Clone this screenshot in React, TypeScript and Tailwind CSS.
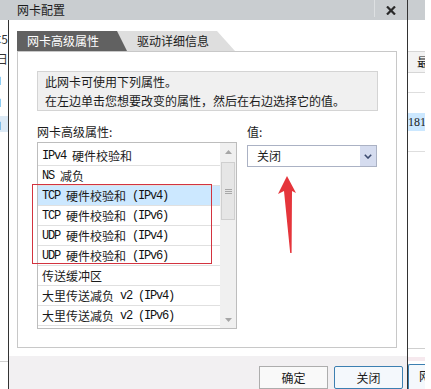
import React from 'react';

const items = [
  'IPv4 硬件校验和',
  'NS 减负',
  'TCP 硬件校验和 (IPv4)',
  'TCP 硬件校验和 (IPv6)',
  'UDP 硬件校验和 (IPv4)',
  'UDP 硬件校验和 (IPv6)',
  '传送缓冲区',
  '大里传送减负 v2 (IPv4)',
  '大里传送减负 v2 (IPv6)',
];

// latin parts get a narrow mono face, like the half-width glyphs of the original
const ItemText = ({ text }: { text: string }) => {
  const parts = text.split(/([\u4e00-\u9fff]+)/).filter(Boolean);
  return (
    <>
      {parts.map((p, i) =>
        /[\u4e00-\u9fff]/.test(p) ? (
          <span key={i}>{p}</span>
        ) : (
          <span key={i} className="font-['Liberation_Mono'] text-[12px] tracking-[-1.2px] whitespace-pre text-[#111]">
            {p}
          </span>
        )
      )}
    </>
  );
};

const Tri = ({ up }: { up?: boolean }) => (
  <svg width="7" height="4" viewBox="0 0 7 4">
    <path d={up ? 'M0 4 L3.5 0 L7 4 Z' : 'M0 0 L3.5 4 L7 0 Z'} fill="#a6a6a6" />
  </svg>
);

export default function App() {
  return (
    <div className="relative w-[431px] h-[389px] overflow-hidden bg-white font-['Noto_Sans_CJK_SC',sans-serif] text-[12px] text-[#1b1b1b]">
      {/* title bar */}
      <div className="flex h-[20px]">
        <div className="flex w-[408px] items-center bg-[#c9cdd0] border-r border-[#333]">
          <span className="flex-1 pl-[17px] leading-[20px]">网卡配置</span>
          <div className="self-start h-[17px] w-px bg-[#dde0e2]" />
          <div className="flex w-[32px] items-center justify-center">
            <svg width="10" height="9" viewBox="0 0 10 9">
              <path d="M1 0.5 L9 8.5 M9 0.5 L1 8.5" stroke="#2a2a2a" strokeWidth="2.2" />
            </svg>
          </div>
        </div>
        <div className="w-[17px] bg-[#c9cdd0]" />
      </div>

      <div className="flex h-[369px]">
        {/* window behind, left edge */}
        <div className="flex w-[8px] flex-col overflow-hidden text-[#333]">
          <div className="h-[12px]" />
          <div className="flex h-[14px] justify-end whitespace-nowrap leading-[14px]">版本5</div>
          <div className="h-[6px]" />
          <div className="flex h-[14px] justify-end whitespace-nowrap leading-[14px]">时间日</div>
          <div className="h-[6px]" />
          <div className="flex h-[14px] justify-end whitespace-nowrap leading-[14px]">卡」</div>
          <div className="h-[8px]" />
          <div className="flex h-[14px] justify-end whitespace-nowrap leading-[14px]">址」</div>
          <div className="h-[8px]" />
          <div className="flex h-[16px] justify-end whitespace-nowrap bg-[#dceaf6] leading-[16px]">值」</div>
          <div className="h-[230px] border-b border-[#cfcfcf]" />
        </div>

        {/* dialog */}
        <div className="flex w-[400px] flex-col border-l border-r border-[#333]">
          <div className="h-[337px] bg-white pl-[8px] pt-[11px]">
            <div className="flex h-[20px]">
              <div className="relative z-10 w-[110px] bg-[#616161] pl-[10px] leading-[20px] text-white [clip-path:polygon(0_0,100px_0,110px_100%,0_100%)]">
                网卡高级属性
              </div>
              <div className="-ml-[10px] w-[118px] bg-[#dedede] pl-[20px] leading-[20px] [clip-path:polygon(0_0,100px_0,118px_100%,0_100%)]">
                驱动详细信息
              </div>
            </div>

            <div className="h-[297px] w-[380px] border border-[#c8c8c8] pl-[19px] pt-[19px]">
              <div className="h-[40px] w-[341px] border border-[#d4d4d4] bg-[#f0f0f0] pl-[7px] leading-[19px]">
                <div>此网卡可使用下列属性。</div>
                <div className="whitespace-nowrap">在左边单击您想要改变的属性，然后在右边选择它的值。</div>
              </div>

              <div className="mt-[11px] flex">
                <div className="w-[200px]">
                  <div className="h-[20px] leading-[20px]">网卡高级属性:</div>
                  <div className="flex h-[187px] border border-[#bdbdbd]">
                    <div className="flex-1 overflow-hidden pt-[3px]">
                      {items.map((it, i) => (
                        <div
                          key={it}
                          className={`flex h-[20px] items-center whitespace-nowrap border-b border-[#e0e0e0] pl-[4px] ${
                            i === 2 ? 'bg-[#cce8ff]' : ''
                          }`}
                        >
                          <ItemText text={it} />
                        </div>
                      ))}
                    </div>
                    <div className="flex w-[16px] flex-col bg-[#f0f0f0]">
                      <div className="flex h-[17px] items-center justify-center">
                        <Tri up />
                      </div>
                      <div className="mx-[1px] mt-[2px] flex h-[58px] items-center justify-center border border-[#cfcfcf] bg-[#e6e6e6]">
                        <div className="flex w-[7px] flex-col gap-[1px]">
                          <div className="h-px bg-[#a8a8a8]" />
                          <div className="h-px bg-[#a8a8a8]" />
                          <div className="h-px bg-[#a8a8a8]" />
                        </div>
                      </div>
                      <div className="flex-1" />
                      <div className="flex h-[17px] items-center justify-center">
                        <Tri />
                      </div>
                    </div>
                  </div>
                </div>

                <div className="ml-[10px]">
                  <div className="h-[20px] leading-[20px]">值:</div>
                  <div className="mt-[3px] flex h-[22px] w-[130px] border border-[#abb2c4] bg-white">
                    <span className="flex-1 pl-[9px] leading-[20px]">关闭</span>
                    <div className="flex w-[16px] items-center justify-center bg-[#d5dcef]">
                      <svg width="8" height="5" viewBox="0 0 8 5">
                        <path d="M0.8 0.8 L4 4 L7.2 0.8" fill="none" stroke="#3d4c70" strokeWidth="1.6" />
                      </svg>
                    </div>
                  </div>
                </div>
              </div>
            </div>
          </div>

          <div className="flex flex-1 justify-end gap-[6px] bg-[#f2f0f2] pr-[4px] pt-[10px]">
            <button className="h-[23px] w-[69px] border border-[#adadad] bg-[#f9f9f9] text-[12px]">确定</button>
            <button className="h-[23px] w-[69px] rounded-[2px] border border-[#3c7fb1] bg-[#f4f8fc] text-[12px]">关闭</button>
          </div>
        </div>

        {/* window behind, right edge */}
        <div className="w-[17px] overflow-hidden">
          <div className="h-[31px]" />
          <div className="h-[22px] whitespace-nowrap border-y border-[#d6d6d6] bg-[#f3f3f3] pl-[9px] leading-[20px]">最近</div>
          <div className="h-[20px] border-b border-[#dedede]" />
          <div className="h-[20px]" />
          <div className="h-[18px] whitespace-nowrap bg-[#cce8ff] font-['Liberation_Serif'] leading-[18px]">181</div>
          <div className="h-[21px] border-b border-[#dedede]" />
          <div className="h-[197px] border-b border-[#cfcfcf]" />
          <div className="h-[8px]" />
          <div className="h-[4px] bg-[#f6e9ee]" />
          <div className="h-[3px]" />
          <div className="h-[26px] whitespace-nowrap rounded-tl-[2px] border-l border-t border-[#3c7fb1] bg-[#f4f8fc] pl-[10px] leading-[22px]">网络</div>
        </div>
      </div>

      {/* red annotation */}
      <div className="absolute left-[32px] top-[184px] h-[80px] w-[180px] border border-[#d3333f]" />
      <svg className="absolute left-[276px] top-[174px]" width="22" height="82" viewBox="0 0 22 82">
        <path d="M11 2 L20 19 L16 17 L15.6 79 L14.2 79 L8 17 L2 20 Z" fill="#e5353b" />
      </svg>
    </div>
  );
}
